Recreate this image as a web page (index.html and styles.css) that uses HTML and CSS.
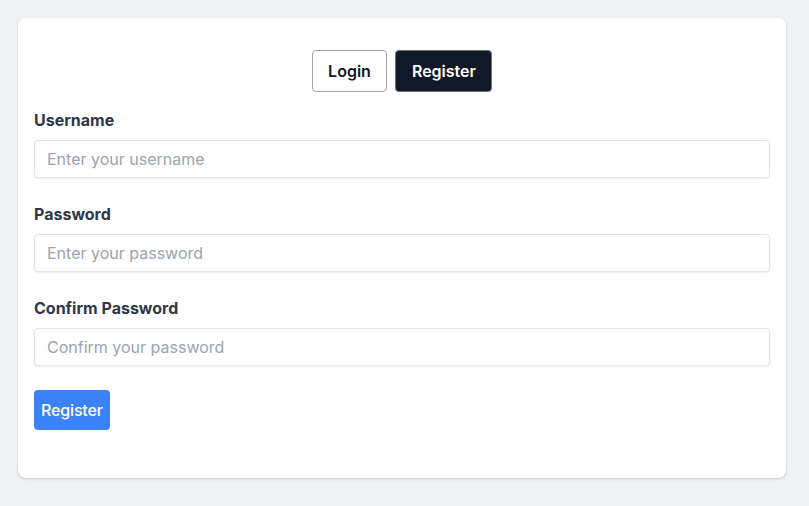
FILE: index.html
```html
<!DOCTYPE html>
<html>
<head>
<meta charset="utf-8">
<link rel="stylesheet" href="styles.css">
</head>
<body>
<div class="card">
  <div class="tabs">
    <button class="tab">Login</button>
    <button class="tab active">Register</button>
  </div>
  <form class="form">
    <div class="field">
      <label class="label">Username</label>
      <input class="input" type="text" placeholder="Enter your username">
    </div>
    <div class="field">
      <label class="label">Password</label>
      <input class="input" type="password" placeholder="Enter your password">
    </div>
    <div class="field">
      <label class="label">Confirm Password</label>
      <input class="input" type="password" placeholder="Confirm your password">
    </div>
    <button class="submit" type="button">Register</button>
  </form>
</div>
</body>
</html>
```
FILE: styles.css
```css
* { box-sizing: border-box; }
html, body { margin: 0; padding: 0; }
body {
  background: #f0f1f3;
  font-family: Inter, "Liberation Sans", sans-serif;
  padding: 18px 23px 28px 18px;
}
.card {
  background: #fff;
  border-radius: 8px;
  box-shadow: 0 1px 3px rgba(0,0,0,0.12), 0 1px 2px rgba(0,0,0,0.06);
  padding: 32px 16px 48px 16px;
  height: 460px;
}
.tabs {
  display: flex;
  justify-content: center;
  gap: 8px;
  margin-bottom: 16px;
}
.tab {
  height: 42px;
  padding: 0 15.5px;
  font-family: inherit;
  font-size: 16px;
  font-weight: 600;
  border-radius: 4px;
  border: 1px solid #9ca3af;
  background: #fff;
  color: #111827;
}
.tab.active {
  background: #111827;
  color: #fff;
  border-color: #6b7280;
}
.form { display: flex; flex-direction: column; }
.field { display: flex; flex-direction: column; gap: 8px; margin-bottom: 24px; }
.label {
  font-size: 16px;
  font-weight: 700;
  line-height: 24px;
  color: #2d3748;
}
.input {
  height: 38px;
  width: 100%;
  padding: 0 12px;
  font-family: inherit;
  font-size: 16px;
  border: 1px solid #e2e4e8;
  border-radius: 4px;
  box-shadow: 0 1px 2px rgba(0,0,0,0.08);
  color: #111827;
}
.input::placeholder { color: #9ca3af; }
.submit {
  align-self: flex-start;
  height: 40px;
  padding: 0 7px;
  letter-spacing: -0.15px;
  background: #3b82f6;
  color: #fff;
  border: none;
  border-radius: 4px;
  font-family: inherit;
  font-size: 16px;
  font-weight: 500;
}
```
